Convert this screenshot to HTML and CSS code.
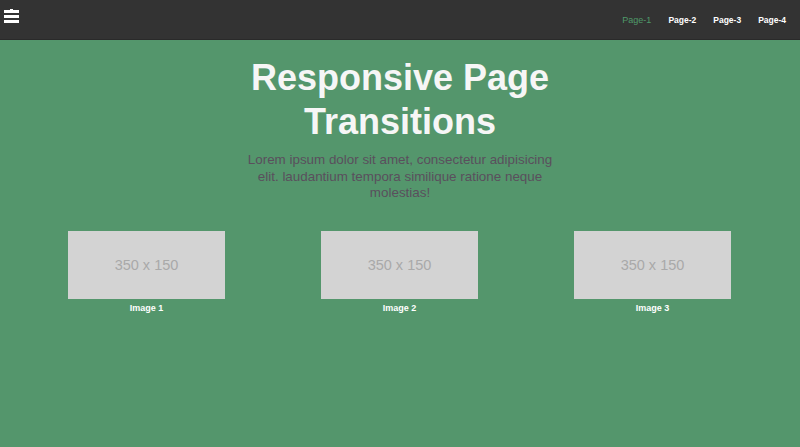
FILE: index.html
```html
<!DOCTYPE html>
<html>
<head>
<meta charset="utf-8">
<link rel="stylesheet" href="styles.css">
</head>
<body>
<header class="topbar">
  <button class="menu" aria-label="menu">
    <svg width="15" height="14" viewBox="0 0 15 14">
      <rect x="6" y="0" width="3" height="2" fill="#fff"/>
      <rect x="0" y="1" width="15" height="3" fill="#fff"/>
      <rect x="0" y="6" width="15" height="3" fill="#fff"/>
      <rect x="0" y="11" width="15" height="3" fill="#fff"/>
    </svg>
  </button>
  <nav class="links">
    <a class="active" href="#">Page-1</a>
    <a href="#">Page-2</a>
    <a href="#">Page-3</a>
    <a href="#">Page-4</a>
  </nav>
</header>
<main class="page">
  <h1 class="title">Responsive Page<br>Transitions</h1>
  <p class="lead">Lorem ipsum dolor sit amet, consectetur adipisicing elit. laudantium tempora similique ratione neque molestias!</p>
  <section class="gallery">
    <figure class="item"><div class="ph">350 x 150</div><figcaption>Image 1</figcaption></figure>
    <figure class="item"><div class="ph">350 x 150</div><figcaption>Image 2</figcaption></figure>
    <figure class="item"><div class="ph">350 x 150</div><figcaption>Image 3</figcaption></figure>
  </section>
</main>
</body>
</html>
```
FILE: styles.css
```css
html, body {
  margin: 0;
  padding: 0;
  height: 100%;
}
body {
  background: #54966c;
  font-family: "Liberation Sans", Arial, sans-serif;
}
.topbar {
  height: 39px;
  background: #333333;
  border-bottom: 1px solid #2a2a2a;
  display: flex;
  align-items: center;
  justify-content: space-between;
  padding: 0 14px 0 4px;
}
.menu {
  background: none;
  border: 0;
  padding: 0;
  margin-top: -7px;
  display: flex;
}
.links {
  display: flex;
  gap: 17px;
  margin-top: 1px;
}
.links a {
  color: #ffffff;
  text-decoration: none;
  font-size: 8.5px;
  font-weight: bold;
}
.links a.active {
  color: #4f9a6a;
  font-weight: normal;
  font-size: 9px;
}
.page {
  display: flex;
  flex-direction: column;
  align-items: center;
}
.title {
  margin: 16px 0 0;
  color: #f6f6f6;
  font-size: 36px;
  line-height: 44px;
  font-weight: bold;
  text-align: center;
}
.lead {
  width: 310px;
  margin: 8px 0 0;
  color: #5a4f5d;
  font-size: 13.4px;
  line-height: 16.5px;
  text-align: center;
}
.gallery {
  align-self: stretch;
  display: grid;
  grid-template-columns: repeat(3, 1fr);
  padding: 0 21px 0 20px;
  margin-top: 29px;
}
.item {
  margin: 0;
  display: flex;
  flex-direction: column;
  align-items: center;
}
.ph {
  width: 157px;
  height: 68px;
  background: #d3d3d3;
  color: #a9a9a9;
  font-size: 14.5px;
  display: flex;
  align-items: center;
  justify-content: center;
}
figcaption {
  margin-top: 4px;
  color: #ffffff;
  font-size: 9px;
  font-weight: bold;
}
```
